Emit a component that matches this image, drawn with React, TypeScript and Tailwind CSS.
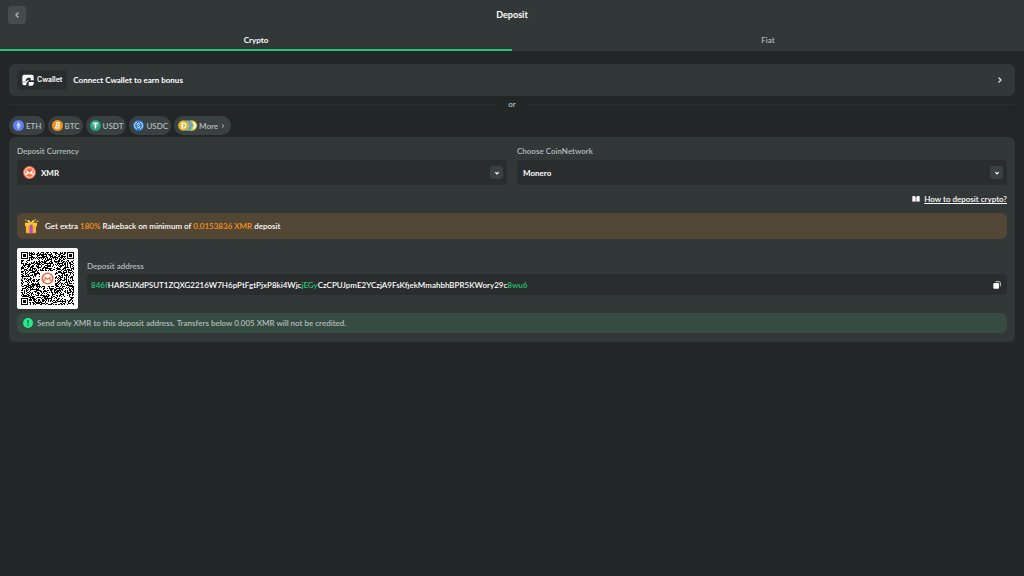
import { ReactNode, useState } from 'react'
import { ChevronLeft, ChevronRight } from 'lucide-react'

interface IconProps {
  className?: string
}

interface IChip {
  label: string
  icon: ReactNode
}

const QR_SIZE = 53

// finder pattern module at (x, y) relative to its corner, -1 and 7 are the quiet border
const finder = (x: number, y: number) => {
  const d = Math.max(Math.abs(x - 3), Math.abs(y - 3))
  return d === 3 || d <= 1
}

const buildQr = () => {
  let path = ''
  let seed = 8461

  for (let y = 0; y < QR_SIZE; y++) {
    for (let x = 0; x < QR_SIZE; x++) {
      seed = (seed * 1103515245 + 12345) % 2147483648
      let dark = (seed / 65536) % 100 < 51

      const right = x - (QR_SIZE - 7)
      const bottom = y - (QR_SIZE - 7)
      if (x < 8 && y < 8) dark = finder(x, y)
      else if (right > -2 && y < 8) dark = finder(right, y)
      else if (x < 8 && bottom > -2) dark = finder(x, bottom)
      else if (x === 6) dark = y % 2 === 0
      else if (y === 6) dark = x % 2 === 0

      if (dark) path += `M${x} ${y}h1v1h-1z`
    }
  }

  return path
}

const qrPath = buildQr()

const MoneroIcon = ({ className }: IconProps) => (
  <svg viewBox="0 0 32 32" className={className} aria-hidden="true">
    <circle cx="16" cy="16" r="16" fill="#f0693f" />
    <circle cx="16" cy="16" r="12" fill="none" stroke="#fff" strokeWidth="2" />
    <path d="M5 20h5v-7l6 6 6-6v7h5" fill="none" stroke="#fff" strokeWidth="3" />
  </svg>
)

const MoneroOutline = () => (
  <svg viewBox="0 0 32 32" className="absolute size-[15px] bg-white p-px" aria-hidden="true">
    <circle cx="16" cy="16" r="13" fill="none" stroke="#f0693f" strokeWidth="4" />
    <path d="M6 20h4v-7l6 5 6-5v7h4" fill="none" stroke="#f0693f" strokeWidth="2.500" />
  </svg>
)

const EthIcon = ({ className }: IconProps) => (
  <svg viewBox="0 0 32 32" className={className} aria-hidden="true">
    <circle cx="16" cy="16" r="16" fill="#627eea" />
    <path d="M16 5l-6 11 6 3.500 6-3.500z" fill="#fff" fillOpacity=".7" />
    <path d="M16 5v14.500l6-3.500z" fill="#c5d0fa" />
    <path d="M10 18.500L16 27l6-8.500-6 3.500z" fill="#fff" fillOpacity=".8" />
  </svg>
)

const BtcIcon = ({ className }: IconProps) => (
  <svg viewBox="0 0 32 32" className={className} aria-hidden="true">
    <circle cx="16" cy="16" r="16" fill="#f7931a" />
    <g transform="rotate(13 16 16)" fill="none" stroke="#fff" strokeWidth="3">
      <path d="M10 9h7.500a3.300 3.300 0 010 7H12.500h6a3.500 3.500 0 010 7.200H10M12.500 9v14" />
      <path d="M14 5v4M18 5v4M14 23v4M18 23v4" strokeWidth="2" />
    </g>
  </svg>
)

const UsdtIcon = ({ className }: IconProps) => (
  <svg viewBox="0 0 32 32" className={className} aria-hidden="true">
    <circle cx="16" cy="16" r="16" fill="#26a17b" />
    <path d="M8 7h16v4h-6v14h-4V11H8z" fill="#fff" />
    <ellipse cx="16" cy="15.500" rx="9" ry="2" fill="none" stroke="#fff" strokeWidth="1.200" />
  </svg>
)

const UsdcIcon = ({ className }: IconProps) => (
  <svg viewBox="0 0 32 32" className={className} aria-hidden="true">
    <circle cx="16" cy="16" r="16" fill="#2775ca" />
    <g fill="none" stroke="#fff" strokeWidth="2.400">
      <path d="M12 5.500a11 11 0 000 21M20 5.500a11 11 0 010 21" />
      <path d="M20 13c0-2-1.800-3-4-3s-4 1-4 3c0 4 8 2 8 6 0 2-1.800 3-4 3s-4-1-4-3M16 7.500V10M16 22v2.500" />
    </g>
  </svg>
)

const MoreCoinsIcon = () => (
  <svg viewBox="0 0 57 33" className="h-[11px] w-[19px]" aria-hidden="true">
    <circle cx="41" cy="16.500" r="16" fill="#e9c83b" />
    <path d="M46 7l7 9.500-7 9.500" fill="none" stroke="#fff" strokeWidth="4" />
    <circle cx="29" cy="16.500" r="16" fill="#4fc3b0" />
    <path d="M32 8h7M34 16h9M32 24h7" stroke="#b06be0" strokeWidth="4" />
    <circle cx="16.500" cy="16.500" r="16" fill="#dcb42f" />
    <path d="M12 9h4a7.500 7.500 0 010 15h-4zM8 16.500h9" fill="none" stroke="#fff" strokeWidth="3.500" />
  </svg>
)

const CwalletIcon = () => (
  <svg viewBox="0 0 36 36" className="size-3" aria-hidden="true">
    <path
      d="M7 2h22a6 6 0 016 6v11h-9v-5a3 3 0 00-3-3h-6l-6 6v6H1V8a6 6 0 016-6z"
      fill="#fff"
    />
    <path d="M1 25h8l7-6h5l-8 8v7H7a6 6 0 01-6-6z" fill="#fff" />
    <path d="M20 24h15v5a6 6 0 01-6 6h-9z" fill="#fff" />
  </svg>
)

const GiftIcon = () => (
  <svg viewBox="0 0 48 48" className="size-4" aria-hidden="true">
    <path d="M9 22h30v22a2 2 0 01-2 2H11a2 2 0 01-2-2z" fill="#f5a81c" />
    <path d="M6 14h36v11H6z" fill="#fcc72d" />
    <path d="M20 20h9v26h-9z" fill="#b14ccf" />
    <path d="M24 15C14 15 10 6 16 6c5 0 8 9 8 9s3-9 8-9c6 0 2 9-8 9z" fill="#ffe04a" />
    <path d="M7 5l3 4M38 3l-2 4M46 9l-5 2" stroke="#ffd94a" strokeWidth="3" />
    <path d="M12 26v16M36 26v16" stroke="#fbd04a" strokeWidth="3" />
  </svg>
)

const BookIcon = () => (
  <svg viewBox="0 0 24 18" className="h-[6px] w-2" aria-hidden="true">
    <path d="M1 1c4-1 7-1 10 1v15c-3-1-6-1-10 0zM23 1c-4-1-7-1-10 1v15c3-1 6-1 10 0z" fill="#fff" />
  </svg>
)

const CopyIcon = () => (
  <svg viewBox="0 0 24 24" className="size-2" aria-hidden="true">
    <path d="M8 2h11a3 3 0 013 3v11" fill="none" stroke="#c3c9c9" strokeWidth="3" />
    <rect x="1" y="6" width="17" height="17" rx="3" fill="#fff" />
  </svg>
)

const ArrowDown = () => (
  <span className="pointer-events-none absolute right-1 flex size-[13px] items-center justify-center rounded-[3px] bg-[#3a4142]">
    <svg viewBox="0 0 10 10" className="size-2" aria-hidden="true">
      <path d="M3 4l2 2 2-2" fill="none" stroke="#fff" strokeWidth="1.500" />
    </svg>
  </span>
)

const chips: IChip[] = [
  { label: 'ETH', icon: <EthIcon className="size-[11px]" /> },
  { label: 'BTC', icon: <BtcIcon className="size-[11px]" /> },
  { label: 'USDT', icon: <UsdtIcon className="size-[11px]" /> },
  { label: 'USDC', icon: <UsdcIcon className="size-[11px]" /> },
]

const tabs = ['Crypto', 'Fiat']

const Header = () => {
  const [active, setActive] = useState('Crypto')

  return (
    <header className="bg-[#323738]">
      <div className="grid h-[30px] grid-cols-[1fr_auto_1fr] items-center px-2">
        <button
          aria-label="Back"
          className="flex size-[18px] items-center justify-center rounded-[3px] bg-[#454c4d] text-[#b3bcbc]"
        >
          <ChevronLeft size={8} strokeWidth={4} />
        </button>
        <h1 className="text-[9px] font-bold text-white">Deposit</h1>
      </div>
      <div role="tablist" className="grid grid-cols-2">
        {tabs.map((tab) => (
          <button
            key={tab}
            role="tab"
            aria-selected={tab === active}
            onClick={() => setActive(tab)}
            className={
              tab === active
                ? 'h-[21px] border-b-2 border-[#24c573] font-bold text-white'
                : 'h-[21px] border-b-2 border-transparent font-semibold text-[#b3bebe]'
            }
          >
            {tab}
          </button>
        ))}
      </div>
    </header>
  )
}

const App = () => {
  return (
    <div className="min-h-screen bg-[#232626] font-['Lato',sans-serif] text-[8px] leading-3 text-[#b3bebe]">
      <Header />
      <main className="px-[9px] pt-[13px]">
        <button className="flex h-8 w-full items-center rounded-md bg-[#323738] pr-[11px] pl-2 text-white">
          <span className="flex h-5 items-center gap-[3px] rounded-sm bg-[#292d2e] px-[5px] font-['Inter',sans-serif] text-[7px] font-semibold">
            <CwalletIcon />
            Cwallet
          </span>
          <span className="ml-[6px] font-bold">Connect Cwallet to earn bonus</span>
          <ChevronRight size={8} strokeWidth={4} className="ml-auto text-[#dfe4e4]" />
        </button>

        <div className="flex h-5 items-center gap-2 pb-1 font-semibold">
          <hr className="flex-1 border-[#282c2c]" />
          or
          <hr className="flex-1 border-[#282c2c]" />
        </div>

        <div className="flex gap-[3px] pb-[2px] font-semibold">
          {chips.map((chip) => (
            <button
              key={chip.label}
              className="flex h-[19px] items-center gap-[2px] rounded-full bg-[#3a4142] pr-[3px] pl-1"
            >
              {chip.icon}
              {chip.label}
            </button>
          ))}
          <button className="flex h-[19px] items-center gap-[2px] rounded-full bg-[#3a4142] pr-[5px] pl-1">
            <MoreCoinsIcon />
            More
            <ChevronRight size={6} strokeWidth={4} />
          </button>
        </div>

        <section className="rounded-md bg-[#323738] px-2 pt-2 pb-[9px]">
          <div className="grid grid-cols-2 gap-[10px]">
            <div>
              <label htmlFor="currency" className="block h-[15px] font-semibold">
                Deposit Currency
              </label>
              <div className="relative flex items-center">
                <MoneroIcon className="pointer-events-none absolute left-[6px] size-[13px]" />
                <select
                  id="currency"
                  className="h-[25px] w-full appearance-none rounded-sm bg-[#292d2e] pl-6 font-bold text-white"
                >
                  <option>XMR</option>
                </select>
                <ArrowDown />
              </div>
            </div>
            <div>
              <label htmlFor="network" className="block h-[15px] font-semibold">
                Choose CoinNetwork
              </label>
              <div className="relative flex items-center">
                <select
                  id="network"
                  className="h-[25px] w-full appearance-none rounded-sm bg-[#292d2e] pl-[6px] font-bold text-white"
                >
                  <option>Monero</option>
                </select>
                <ArrowDown />
              </div>
            </div>
          </div>

          <div className="flex h-7 items-center justify-end gap-1">
            <BookIcon />
            <a href="#how-to" className="font-semibold text-white underline">
              How to deposit crypto?
            </a>
          </div>

          <div className="flex h-[26px] items-center gap-[6px] rounded-md bg-[#524635] px-[6px] font-semibold text-white">
            <GiftIcon />
            <p>
              Get extra <span className="text-[#f7931a]">180%</span> Rakeback on minimum of{' '}
              <span className="text-[#f7931a]">0.0153836 XMR</span> deposit
            </p>
          </div>

          <div className="mt-[9px] flex gap-[9px]">
            <div className="relative flex size-[61px] items-center justify-center rounded-[2px] bg-white">
              <svg viewBox="0 0 53 53" className="size-[53px]" role="img" aria-label="Deposit address QR code">
                <path d={qrPath} fill="#000" />
              </svg>
              <MoneroOutline />
            </div>
            <div className="flex-1 pt-3">
              <h2 className="h-[14px] font-semibold">Deposit address</h2>
              <div className="flex h-[21px] items-center justify-between rounded-sm bg-[#292d2e] pr-[6px] pl-1 font-semibold text-white">
                <p>
                  <span className="text-[#24c573]">846f</span>
                  HAR5iJXdPSUT1ZQXG2216W7H6pPtFgtPjxP8ki4Wjc
                  <span className="text-[#24c573]">jEGy</span>
                  CzCPUJpmE2YCzjA9FsKfjekMmahbhBPR5KWory29c
                  <span className="text-[#24c573]">8wu6</span>
                </p>
                <button aria-label="Copy address">
                  <CopyIcon />
                </button>
              </div>
            </div>
          </div>

          <div className="mt-1 flex h-5 items-center gap-1 rounded-md bg-[#364b41] px-[6px] font-semibold">
            <svg viewBox="0 0 20 20" className="size-[10px]" aria-hidden="true">
              <circle cx="10" cy="10" r="10" fill="#24ee89" />
              <path d="M10 4v7M10 13.500v2.500" stroke="#274b3a" strokeWidth="2.500" />
            </svg>
            Send only XMR to this deposit address. Transfers below 0.005 XMR will not be credited.
          </div>
        </section>
      </main>
    </div>
  )
}

export default App
